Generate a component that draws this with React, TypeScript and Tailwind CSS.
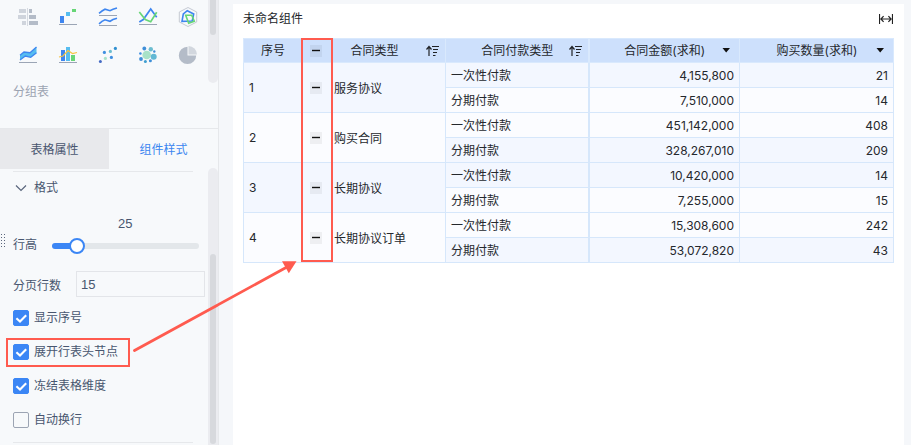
import { type ReactNode, useState } from "react";

type ContractGroup = {
  type: string;
  once: [string, string];
  installments: [string, string];
};

const groups: ContractGroup[] = [
  {
    type: "服务协议",
    once: ["4,155,800", "21"],
    installments: ["7,510,000", "14"],
  },
  {
    type: "购买合同",
    once: ["451,142,000", "408"],
    installments: ["328,267,010", "209"],
  },
  {
    type: "长期协议",
    once: ["10,420,000", "14"],
    installments: ["7,255,000", "15"],
  },
  {
    type: "长期协议订单",
    once: ["15,308,600", "242"],
    installments: ["53,072,820", "43"],
  },
];

export default function App() {
  return (
    <div className="relative flex h-screen overflow-hidden bg-[#f5f7fa] font-['Liberation_Sans','Noto_Sans_CJK_SC',sans-serif] text-xs leading-4">
      <Sidebar />
      <main className="mt-1 mr-[7px] ml-[14px] min-w-0 flex-1 bg-white px-[10px] pt-[7px]">
        <header className="flex h-4 items-center justify-between text-[#222529]">
          <h1>未命名组件</h1>
          <button type="button" aria-label="自适应宽度" className="mr-px">
            <FitWidthIcon />
          </button>
        </header>
        <PivotTable />
      </main>
      <Arrow />
    </div>
  );
}

function Sidebar() {
  const [tab, setTab] = useState("style");

  return (
    <aside className="flex w-[219px] shrink-0 flex-col border-r border-[#e6e8eb] bg-[#f7f9fb] text-[#48566f]">
      <div className="flex h-32 shrink-0">
        <div className="flex-1 pt-[7px]">
          <div className="grid grid-cols-[repeat(5,20px)] gap-x-5 gap-y-[18px] pl-[18px]">
            {chartTypes.map((chart) => (
              <button key={chart.name} type="button" aria-label={chart.name}>
                <svg viewBox="0 0 20 20" className="block size-5" fill="none">
                  {chart.icon}
                </svg>
              </button>
            ))}
          </div>
          <p className="mt-[19px] pl-[13px] text-[#9ba3b1]">分组表</p>
        </div>
        <div className="h-[83px] w-[10px] rounded-b-[5px] bg-[#ebecf0] px-[2px]">
          <div className="h-[35px] rounded-b-[3px] bg-[#d7d9dd]" />
        </div>
      </div>

      <div className="flex h-[41px] shrink-0 border-t border-[#e6e8eb]">
        <button
          type="button"
          onClick={() => setTab("props")}
          aria-pressed={tab === "props"}
          className="flex-1 bg-[#e8e9ec] pt-[2px] aria-pressed:bg-transparent aria-pressed:text-[#3b86f0]"
        >
          表格属性
        </button>
        <button
          type="button"
          onClick={() => setTab("style")}
          aria-pressed={tab === "style"}
          className="flex-1 bg-[#e8e9ec] pt-[2px] aria-pressed:bg-transparent aria-pressed:text-[#3b86f0]"
        >
          组件样式
        </button>
      </div>

      <div className="flex min-h-0 flex-1">
        <StyleForm />
        <div className="-mt-px w-[10px] shrink-0 rounded-t-[5px] bg-[#ebecf0] px-[2px] pt-[86px]">
          <div className="h-[190px] rounded-[3px] bg-[#d7d9dd]" />
        </div>
      </div>
    </aside>
  );
}

function StyleForm() {
  const [rowHeight, setRowHeight] = useState(25);
  const filled = rowHeight - 12;

  return (
    <form className="min-w-0 flex-1 pt-[2px]">
      <div className="mr-[15px] ml-[13px] border-t border-[#e6e8eb]" />
      <button type="button" className="mt-2 flex h-4 items-center gap-[7px] pl-[15px]">
        <svg viewBox="0 0 12 8" className="h-2 w-3" fill="none" stroke="#5a667c">
          <path d="M1 1.5l5 5 5-5" strokeWidth="1.2" />
        </svg>
        格式
      </button>

      <output htmlFor="row-height" className="mt-5 block pl-[118px] text-[13px]">
        {rowHeight}
      </output>
      <div className="mt-[5px] flex h-4 items-center">
        <svg viewBox="0 0 6 14" className="mr-[7px] h-[14px] w-[6px] shrink-0 -translate-y-1" fill="#5a667c">
          {[1, 4, 7, 10, 13].map((y) => (
            <path key={y} d={`M1 ${y - 1}h1v1h-1zM4 ${y - 1}h1v1h-1z`} />
          ))}
        </svg>
        <label htmlFor="row-height" className="w-[39px] shrink-0">
          行高
        </label>
        <input
          id="row-height"
          type="range"
          min={12}
          max={112}
          value={rowHeight}
          onChange={(event) => setRowHeight(Number(event.target.value))}
          style={{
            backgroundImage: `linear-gradient(to right, #3b86f5 ${filled + 4}%, #e3e7ea ${filled + 4}%)`,
          }}
          className="mt-[2px] mr-[9px] h-[6px] min-w-0 flex-1 appearance-none rounded-full [&::-webkit-slider-thumb]:size-4 [&::-webkit-slider-thumb]:appearance-none [&::-webkit-slider-thumb]:rounded-full [&::-webkit-slider-thumb]:border-2 [&::-webkit-slider-thumb]:border-[#3b86f5] [&::-webkit-slider-thumb]:bg-white"
        />
      </div>

      <div className="mt-[18px] flex items-center pl-[13px]">
        <label htmlFor="page-rows" className="w-[63px] shrink-0 pt-[3px]">
          分页行数
        </label>
        <input
          id="page-rows"
          type="text"
          defaultValue="15"
          className="mr-[3px] h-[26px] min-w-0 flex-1 border border-[#e3e5e9] bg-transparent px-1 text-[13px]"
        />
      </div>

      <div className="pt-1">
        <CheckRow label="显示序号" defaultChecked />
        <CheckRow label="展开行表头节点" defaultChecked highlighted />
        <CheckRow label="冻结表格维度" defaultChecked />
        <CheckRow label="自动换行" />
      </div>
      <div className="mt-[5px] mr-[15px] ml-[13px] border-t border-[#e6e8eb]" />
    </form>
  );
}

type CheckRowProps = {
  label: string;
  defaultChecked?: boolean;
  highlighted?: boolean;
};

function CheckRow({ label, defaultChecked, highlighted }: CheckRowProps) {
  return (
    <div className="flex h-[34px] items-center pl-[6px]">
      <label
        className={`flex h-[29px] items-center gap-[5px] border-2 pr-[10px] pl-[5px] ${
          highlighted ? "border-[#ff5b4f]" : "border-transparent"
        }`}
      >
        <span className="grid size-4">
          <input
            type="checkbox"
            defaultChecked={defaultChecked}
            className="peer col-start-1 row-start-1 size-4 appearance-none rounded-[2px] border border-[#9ca4b3] checked:border-[#3b86f5] checked:bg-[#3b86f5]"
          />
          <svg
            viewBox="0 0 16 16"
            className="pointer-events-none invisible col-start-1 row-start-1 size-4 peer-checked:visible"
            fill="none"
          >
            <path d="M3.400 8.200l3.600 3.400 6.200-6.300" stroke="white" strokeWidth="2.1" />
          </svg>
        </span>
        {label}
      </label>
    </div>
  );
}

function PivotTable() {
  return (
    <table className="mt-[11px] w-full table-fixed border-collapse font-['Inter','Noto_Sans_CJK_SC',sans-serif] text-[#25282d] [&_td]:border [&_td]:border-[#d6e7fb] [&_th]:border [&_th]:border-[#d9e9fd]">
      <colgroup>
        <col className="w-[59px]" />
        <col className="w-[143px]" />
        <col className="w-[143px]" />
        <col className="w-[151px]" />
        <col />
      </colgroup>
      <thead>
        <tr className="h-6 bg-[#cde0fc]">
          <th className="p-0 font-normal">序号</th>
          <th className="p-0 font-normal">
            <HeaderLabel before={<CollapseButton />} after={<SortIcon />}>
              合同类型
            </HeaderLabel>
          </th>
          <th className="border-r-2! p-0 font-normal">
            <HeaderLabel after={<SortIcon />}>合同付款类型</HeaderLabel>
          </th>
          <th className="p-0 font-normal">
            <HeaderLabel after={<CaretIcon />}>合同金额(求和)</HeaderLabel>
          </th>
          <th className="p-0 font-normal">
            <HeaderLabel after={<CaretIcon />}>购买数量(求和)</HeaderLabel>
          </th>
        </tr>
      </thead>
      {groups.map((group, index) => {
        const tinted = index % 2 === 0;
        const groupBg = tinted ? "bg-[#f3f7ff]" : "bg-[#fbfcff]";
        const otherBg = tinted ? "bg-[#fbfcff]" : "bg-[#f3f7ff]";

        return (
          <tbody key={group.type}>
            <tr className={`h-[25px] ${groupBg}`}>
              <td rowSpan={2} className="px-[5px] py-0">
                {index + 1}
              </td>
              <td rowSpan={2} className="p-0">
                <div className="flex items-center gap-3 pl-[7px]">
                  <CollapseButton />
                  <span className="pt-[2px]">{group.type}</span>
                </div>
              </td>
              <PaymentCells label="一次性付款" values={group.once} />
            </tr>
            <tr className={`h-[25px] ${otherBg}`}>
              <PaymentCells label="分期付款" values={group.installments} />
            </tr>
          </tbody>
        );
      })}
    </table>
  );
}

function PaymentCells({ label, values }: { label: string; values: [string, string] }) {
  return (
    <>
      <td className="border-r-2! px-[5px] pt-[2px] pb-0">{label}</td>
      {values.map((value, index) => (
        <td key={index} className="px-[5px] pt-[2px] pb-0 text-right">
          {value}
        </td>
      ))}
    </>
  );
}

type HeaderLabelProps = {
  before?: ReactNode;
  after: ReactNode;
  children: ReactNode;
};

function HeaderLabel({ before, after, children }: HeaderLabelProps) {
  return (
    <div className="flex h-4 items-center pr-[6px] pl-[7px]">
      <span className="flex w-[15px]">{before}</span>
      <span className="flex-1 text-center">{children}</span>
      <span className="flex w-[15px] justify-end">{after}</span>
    </div>
  );
}

function CollapseButton() {
  return (
    <button
      type="button"
      aria-label="收起"
      className="grid size-3 shrink-0 place-items-center bg-black/5"
    >
      <svg viewBox="0 0 12 12" className="size-3" stroke="#111">
        <path d="M2 5.500h8" strokeWidth="1.4" />
      </svg>
    </button>
  );
}

function SortIcon() {
  return (
    <svg viewBox="0 0 13 12" className="h-3 w-[13px]" fill="none" stroke="#202226">
      <path d="M3 11V2M0.500 4.500L3 1.500 5.500 4.500" strokeWidth="1.2" />
      <path d="M6 1.500h7M7 4.500h5M7 7.500h4M7 10.500h2.500" strokeWidth="1.1" />
    </svg>
  );
}

function CaretIcon() {
  return (
    <svg viewBox="0 0 8 5" className="mr-[3px] h-[5px] w-2" fill="#111">
      <path d="M0.500 0h7.500L4.200 4.500z" />
    </svg>
  );
}

function FitWidthIcon() {
  return (
    <svg viewBox="0 0 14 10" className="block h-[10px] w-[14px]" fill="none" stroke="#222">
      <path d="M0.500 0v10M13.500 0v10M2.200 5h9.600M4.600 2.200L1.900 5l2.700 2.800M9.400 2.200L12.100 5 9.400 7.800" strokeWidth="1.2" />
    </svg>
  );
}

// Red callout: frames the collapse column and points at it from the checkbox
function Arrow() {
  return (
    <svg
      viewBox="0 0 340 380"
      className="pointer-events-none absolute top-0 left-0 h-[380px] w-[340px]"
      fill="none"
      stroke="#ff5b4f"
      aria-hidden="true"
    >
      <path d="M302 39h30v222h-30z" strokeWidth="2" />
      <path d="M134.500 350.500L287 267" strokeWidth="2.800" strokeLinecap="round" />
      <path d="M296.500 261.300h-14.500l6.800 12z" fill="#ff5b4f" stroke="none" />
    </svg>
  );
}

const baseline = <path d="M1 17.500h18" stroke="#9ba5b5" />;

const chartTypes = [
  {
    name: "对比条形图",
    icon: (
      <>
        <path d="M1 2h7v4H1zM0 8h8v4H0zM4 14h4v4H4z" fill="#cfd4dc" />
        <path d="M11 2h3v4h-3zM11 8h7v4h-7zM11 14h9v4h-9z" fill="#b4bcc8" />
        <path d="M9.500 1v18" stroke="#d6dae1" />
      </>
    ),
  },
  {
    name: "瀑布图",
    icon: (
      <>
        <path d="M2 9h4v7H2z" fill="#3e86f0" />
        <path d="M8 5h4v4H8z" fill="#56bdf0" />
        <path d="M14 2h4v3h-4z" fill="#67d676" />
        {baseline}
      </>
    ),
  },
  {
    name: "多折线图",
    icon: (
      <>
        <path
          d="M1 6.300L4 4l3-1.800 5 1.500 3-1.500 4-1.200M1 16.800l3-2.500 3-1.500 5 1.500 3-1.700 4-1.300"
          stroke="#3e86f0"
          strokeWidth="1.6"
        />
        <path d="M1 8.500h18M1 18.500h18" stroke="#9ba5b5" />
      </>
    ),
  },
  {
    name: "折线图",
    icon: (
      <>
        <path d="M1.300 15l4-2.500L12.700 2l6 8.300" stroke="#3e86f0" strokeWidth="1.700" />
        <path d="M1.300 5l6 7.500 5.400 2.200 6-9.500" stroke="#67d676" strokeWidth="1.700" />
        {baseline}
      </>
    ),
  },
  {
    name: "雷达图",
    icon: (
      <>
        <path d="M10 0.500L18.700 5v10L10 19.500 1.300 15V5z" stroke="#c5cad3" />
        <path d="M9.300 3.700l6.400 3.300-1.500 7L4 14.300 5.300 7z" stroke="#3e86f0" strokeWidth="1.600" />
        <path d="M7.700 8.300h6l2.600 6-5.600 2z" stroke="#67d676" strokeWidth="1.600" />
      </>
    ),
  },
  {
    name: "面积图",
    icon: (
      <>
        <path
          d="M2 10.300l4-3.300 6 0.700L18.500 2v6l-5.800 4.300-5.400-1.300L2 15z"
          fill="#56bdf0"
        />
        <path
          d="M2 10.300l4-3.300 6 0.700L18.500 2M18.500 7.800l-5.800 4.500-5.400-1.300L2 15"
          stroke="#3e86f0"
          strokeWidth="1.300"
        />
        {baseline}
      </>
    ),
  },
  {
    name: "组合图",
    icon: (
      <>
        <path d="M3 5h4v11H3z" fill="#3e86f0" />
        <path d="M8 2h4v14H8z" fill="#56bdf0" />
        <path d="M13 10h4v6h-4z" fill="#67d676" />
        <path d="M1 12l4-1 5-5.500 4.500 3 4.500-1" stroke="#f6c443" strokeWidth="1.200" />
        {baseline}
      </>
    ),
  },
  {
    name: "散点图",
    icon: (
      <>
        <circle cx="2.400" cy="16.400" r="1.500" fill="#456bc4" />
        <circle cx="6.400" cy="7.400" r="1.600" fill="#3f8fe0" />
        <circle cx="7.400" cy="13.400" r="1.600" fill="#a8e2c8" />
        <circle cx="12.400" cy="6.400" r="1.600" fill="#6cbdd0" />
        <circle cx="13.400" cy="12.400" r="1.600" fill="#3f8fe0" />
        <circle cx="17.400" cy="3.400" r="1.600" fill="#3090d0" />
      </>
    ),
  },
  {
    name: "气泡图",
    icon: (
      <>
        <circle cx="8.700" cy="10" r="4.300" fill="#a8e2c8" />
        <circle cx="6.300" cy="3.500" r="1.900" fill="#3f8fd8" />
        <circle cx="12.800" cy="4.200" r="2.200" fill="#6cbdd0" />
        <circle cx="16.300" cy="6.500" r="1.200" fill="#3f8fd8" />
        <circle cx="15.700" cy="11.700" r="3" fill="#62b8d4" />
        <circle cx="12.400" cy="15.700" r="1.500" fill="#3f8fd8" />
        <circle cx="7.400" cy="16.400" r="1.500" fill="#3f9fd0" />
        <circle cx="3" cy="14" r="1.900" fill="#3f8fd8" />
        <circle cx="2.400" cy="8.500" r="1.300" fill="#3f8fe0" />
      </>
    ),
  },
  {
    name: "饼图",
    icon: (
      <>
        <path d="M9.500 1.700A8.700 8.700 0 1 0 18.200 10.400H9.500z" fill="#b4bcc8" />
        <path d="M10.500 1A8.600 8.600 0 0 1 19 9.500h-8.500z" fill="#d2d7de" />
      </>
    ),
  },
];
